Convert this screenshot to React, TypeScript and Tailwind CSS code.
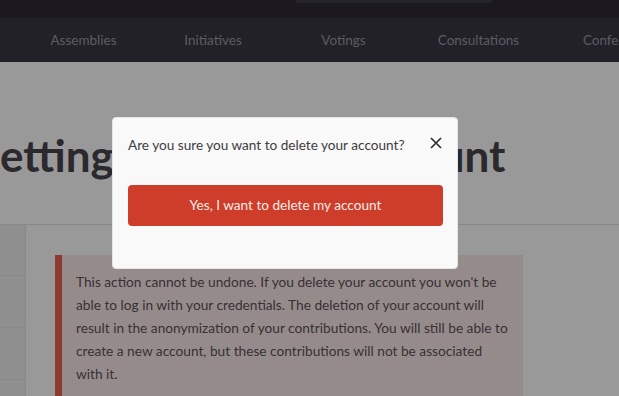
export default function App() {
  return (
    <div className="relative h-[396px] w-[619px] overflow-hidden bg-white font-['Lato',sans-serif]">
      {/* Top bar with search */}
      <div className="h-[18px] bg-[#2d2a35]">
        <div className="ml-[295px] h-[3px] w-[198px] rounded-b-[3px] bg-[#3d3a47]" />
      </div>

      {/* Main nav */}
      <nav className="grid h-[44px] grid-cols-[131px_128px_133px_137px_146px] items-center bg-[#3a3743] pl-[18px] text-[13.5px] text-[#9b98a5]">
        <span className="text-center">Assemblies</span>
        <span className="text-center">Initiatives</span>
        <span className="text-center">Votings</span>
        <span className="text-center">Consultations</span>
        <span className="whitespace-nowrap text-center">Conferences</span>
      </nav>

      {/* Page title */}
      <div className="h-[163px] border-b border-[#e4e4e4] pt-[67px]">
        <h1 className="-ml-[24px] whitespace-nowrap text-[44px] leading-[52px] font-bold text-[#48454d] [word-spacing:-5px]">
          Settings: Delete my account
        </h1>
      </div>

      <div className="flex">
        {/* Side menu */}
        <aside className="w-[26px] shrink-0 border-r border-[#e4e4e4] bg-[#eeeeee]">
          <div className="h-[51px] border-b border-[#e4e4e4]" />
          <div className="h-[52px] border-b border-[#e4e4e4]" />
          <div className="h-[52px] border-b border-[#e4e4e4]" />
          <div className="h-[52px]" />
        </aside>

        {/* Content */}
        <main className="pl-[29px] pt-[30px]">
          <div className="w-[468px] border-l-[7px] border-[#ee6150] bg-[#fae8e8] pb-4 pl-[14px] pr-[12px] pt-[15px] text-[13.7px] leading-[23px] text-[#5a5458]">
            This action cannot be undone. If you delete your account you won't be able to log in with your
            credentials. The deletion of your account will result in the anonymization of your contributions.
            You will still be able to create a new account, but these contributions will not be associated with
            it.
          </div>
        </main>
      </div>

      {/* Modal overlay */}
      <div className="absolute inset-0 bg-black/40" />
      <div
        role="dialog"
        className="absolute left-[112px] top-[117px] h-[152px] w-[346px] rounded-[4px] border border-[#e6e6e6] bg-[#f9f9f9] px-[15px] pt-[17px]"
      >
        <div className="flex items-start justify-between">
          <p className="text-[13.6px] leading-[20px] text-[#3e3d40]">Are you sure you want to delete your account?</p>
          <button className="mt-[2px] text-[#2f2e33]" aria-label="Close">
            <svg width="12" height="12" viewBox="0 0 12 12" fill="none" stroke="currentColor" strokeWidth="1.7">
              <path d="M1 1l10 10M11 1L1 11" />
            </svg>
          </button>
        </div>
        <button className="mt-[30px] h-[41px] w-[315px] rounded-[4px] bg-[#cd3d29] text-[13.6px] text-[#fbece9]">
          Yes, I want to delete my account
        </button>
      </div>
    </div>
  );
}
